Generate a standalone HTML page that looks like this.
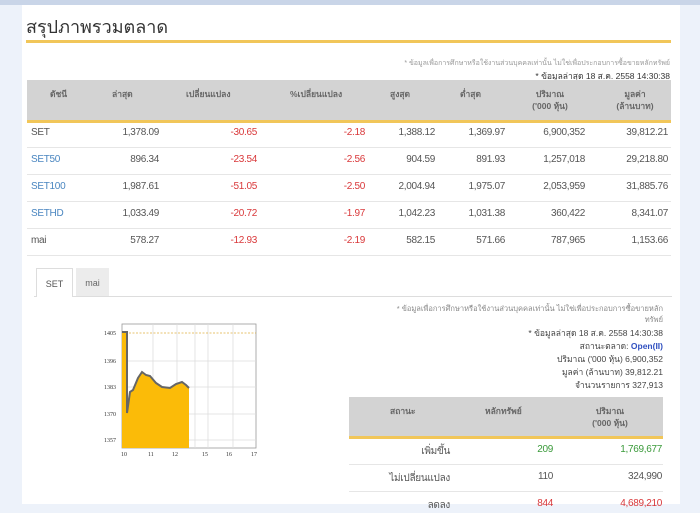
<!DOCTYPE html>
<html><head><meta charset="utf-8"><style>
*{margin:0;padding:0;box-sizing:border-box}
body{width:700px;height:504px;overflow:hidden;background:#edf2fa;font-family:"Liberation Sans","DejaVu Sans",sans-serif;position:relative;color:#555}
.a{position:absolute;white-space:nowrap}
.r{text-align:right}
.c{text-align:center}
.t{font-size:10px;letter-spacing:-0.3px}
.h{font-size:8.5px;font-weight:bold;color:#666;line-height:12px}
.red{color:#d9383a}.blue{color:#4a86c0}.grn{color:#3a9a3a}
</style></head><body>
<div class="a" style="left:0;top:0;width:700px;height:5px;background:#c9d5e8"></div>
<div class="a" style="left:22px;top:5px;width:658px;height:499px;background:#fff"></div>
<div class="a" style="left:26px;top:12px;font-size:18px;color:#333">สรุปภาพรวมตลาด</div>
<div class="a" style="left:26px;top:40px;width:645px;height:3px;background:#f1c659"></div>
<div class="a r" style="right:30px;top:58px;font-size:7px;color:#999">* ข้อมูลเพื่อการศึกษาหรือใช้งานส่วนบุคคลเท่านั้น ไม่ใช่เพื่อประกอบการซื้อขายหลักทรัพย์</div>
<div class="a r" style="right:30px;top:69px;font-size:8.5px;color:#333">* ข้อมูลล่าสุด 18 ส.ค. 2558 14:30:38</div>
<div class="a" style="left:27px;top:80px;width:644px;height:40px;background:#d3d3d3"></div>
<div class="a" style="left:27px;top:120px;width:644px;height:3px;background:#f1c659"></div>
<div class="a h" style="left:50px;top:88px">ดัชนี</div>
<div class="a h" style="left:112px;top:88px">ล่าสุด</div>
<div class="a h" style="left:186px;top:88px">เปลี่ยนแปลง</div>
<div class="a h" style="left:290px;top:88px">%เปลี่ยนแปลง</div>
<div class="a h" style="left:390px;top:88px">สูงสุด</div>
<div class="a h" style="left:460px;top:88px">ต่ำสุด</div>
<div class="a h c" style="left:520px;top:88px;width:60px">ปริมาณ<br>('000 หุ้น)</div>
<div class="a h c" style="left:610px;top:88px;width:50px">มูลค่า<br>(ล้านบาท)</div>
<div id="rows"></div>
<script>
var d=[["SET","1,378.09","-30.65","-2.18","1,388.12","1,369.97","6,900,352","39,812.21",0],
["SET50","896.34","-23.54","-2.56","904.59","891.93","1,257,018","29,218.80",1],
["SET100","1,987.61","-51.05","-2.50","2,004.94","1,975.07","2,053,959","31,885.76",1],
["SETHD","1,033.49","-20.72","-1.97","1,042.23","1,031.38","360,422","8,341.07",1],
["mai","578.27","-12.93","-2.19","582.15","571.66","787,965","1,153.66",0]];
var R=[159,257,365,435,505,585,668],h="";
d.forEach(function(r,i){var y=127+i*27;
h+='<div class="a t '+(r[8]?'blue':'')+'" style="left:31px;top:'+y+'px">'+r[0]+'</div>';
for(var j=1;j<8;j++){h+='<div class="a t r '+(j==2||j==3?'red':'')+'" style="right:'+(700-R[j-1])+'px;top:'+y+'px">'+r[j]+'</div>';}
h+='<div class="a" style="left:27px;top:'+(147+i*27)+'px;width:644px;height:1px;background:#e6e6e6"></div>';});
document.getElementById("rows").innerHTML=h;
</script>
<div class="a" style="left:34px;top:296px;width:638px;height:1px;background:#ddd"></div>
<div class="a" style="left:36px;top:268px;width:37px;height:29px;background:#fff;border:1px solid #ddd;border-bottom:none;font-size:9px;color:#555;text-align:center;line-height:30px">SET</div>
<div class="a" style="left:76px;top:268px;width:33px;height:28px;background:#ececec;font-size:9px;color:#666;text-align:center;line-height:30px">mai</div>
<svg class="a" style="left:100px;top:320px" width="170" height="140" viewBox="0 0 170 140">
<rect x="22" y="4" width="134" height="124" fill="#fff" stroke="#999" stroke-width="0.8"/>
<g stroke="#ddd" stroke-width="0.8">
<line x1="53" y1="4" x2="53" y2="128"/><line x1="77" y1="4" x2="77" y2="128"/><line x1="95" y1="4" x2="95" y2="128"/><line x1="108" y1="4" x2="108" y2="128"/><line x1="133" y1="4" x2="133" y2="128"/>
<line x1="22" y1="41" x2="156" y2="41"/><line x1="22" y1="67" x2="156" y2="67"/><line x1="22" y1="94" x2="156" y2="94"/><line x1="22" y1="120" x2="156" y2="120"/>
</g>
<line x1="22" y1="13" x2="156" y2="13" stroke="#e0b040" stroke-dasharray="2,1.5" stroke-width="0.8"/>
<path d="M22 12 L27 12 L27 93 L30 72 L33 70 L38 58 L42 52 L46 55 L50 56 L56 63 L62 67 L70 68 L76 64 L82 62 L86 65 L89 68 L89 128 L22 128Z" fill="#fbbb08"/>
<path d="M22 12 L27 12 L27 93 L30 72 L33 70 L38 58 L42 52 L46 55 L50 56 L56 63 L62 67 L70 68 L76 64 L82 62 L86 65 L89 68" fill="none" stroke="#666" stroke-width="2"/>
<g font-size="6" fill="#333" font-family="Liberation Serif,serif">
<text x="4" y="15">1405</text><text x="4" y="43">1396</text><text x="4" y="69">1383</text><text x="4" y="96">1370</text><text x="4" y="122">1357</text>
<text x="21" y="136">10</text><text x="48" y="136">11</text><text x="72" y="136">12</text><text x="102" y="136">15</text><text x="126" y="136">16</text><text x="151" y="136">17</text></g>
</svg>
<div class="a r" style="right:37px;top:303px;font-size:7.5px;color:#888;line-height:11px">* ข้อมูลเพื่อการศึกษาหรือใช้งานส่วนบุคคลเท่านั้น ไม่ใช่เพื่อประกอบการซื้อขายหลัก<br>ทรัพย์</div>
<div class="a r" style="right:37px;top:327px;font-size:8.5px;line-height:13px;color:#444">* ข้อมูลล่าสุด 18 ส.ค. 2558 14:30:38<br>สถานะตลาด: <b style="color:#3050c0">Open(II)</b><br>ปริมาณ ('000 หุ้น) 6,900,352<br>มูลค่า (ล้านบาท) 39,812.21<br>จำนวนรายการ 327,913</div>
<div class="a" style="left:349px;top:397px;width:314px;height:39px;background:#d3d3d3"></div>
<div class="a" style="left:349px;top:436px;width:314px;height:3px;background:#f1c659"></div>
<div class="a h" style="left:390px;top:405px">สถานะ</div>
<div class="a h" style="left:485px;top:405px">หลักทรัพย์</div>
<div class="a h c" style="left:580px;top:405px;width:60px">ปริมาณ<br>('000 หุ้น)</div>
<div class="a t r" style="right:250px;top:444px">เพิ่มขึ้น</div>
<div class="a t r grn" style="right:147px;top:444px">209</div>
<div class="a t r grn" style="right:38px;top:444px">1,769,677</div>
<div class="a" style="left:349px;top:464px;width:314px;height:1px;background:#e6e6e6"></div>
<div class="a t r" style="right:250px;top:471px">ไม่เปลี่ยนแปลง</div>
<div class="a t r" style="right:147px;top:471px">110</div>
<div class="a t r" style="right:38px;top:471px">324,990</div>
<div class="a" style="left:349px;top:491px;width:314px;height:1px;background:#e6e6e6"></div>
<div class="a t r" style="right:250px;top:498px">ลดลง</div>
<div class="a t r red" style="right:147px;top:498px">844</div>
<div class="a t r red" style="right:38px;top:498px">4,689,210</div>
</body></html>
